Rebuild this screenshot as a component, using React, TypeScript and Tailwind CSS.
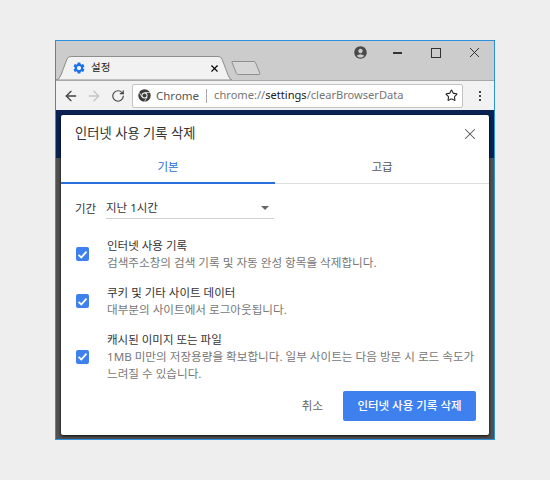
import { ArrowLeft, ArrowRight, RotateCw, Star, X } from "lucide-react";
import { MdAccountCircle, MdSettings } from "react-icons/md";

const rows = [
  {
    title: "인터넷 사용 기록",
    lines: ["검색주소창의 검색 기록 및 자동 완성 항목을 삭제합니다."],
  },
  {
    title: "쿠키 및 기타 사이트 데이터",
    lines: ["대부분의 사이트에서 로그아웃됩니다."],
  },
  {
    title: "캐시된 이미지 또는 파일",
    lines: [
      "1MB 미만의 저장용량을 확보합니다. 일부 사이트는 다음 방문 시 로드 속도가",
      "느려질 수 있습니다.",
    ],
  },
];

function Checkbox() {
  return (
    <div className="flex h-[14px] w-[13px] shrink-0 items-center justify-center rounded-[2px] bg-[#3f80ef]">
      <svg width="11" height="11" viewBox="0 0 11 11" fill="none">
        <path d="M1.5 5.8 4.3 8.5 9.5 2.6" stroke="white" strokeWidth="1.8" />
      </svg>
    </div>
  );
}

function ChromeLogo() {
  return (
    <svg width="13" height="13" viewBox="0 0 24 24">
      <circle cx="12" cy="12" r="11.5" fill="#3c3c3c" />
      <circle cx="12" cy="12" r="5.6" fill="white" />
      <circle cx="12" cy="12" r="3.8" fill="#3c3c3c" />
      <path d="M12 6.4h10M7.2 14.8 2.4 6.5M16.8 14.8 11.8 23.4" stroke="white" strokeWidth="1.3" />
    </svg>
  );
}

export default function App() {
  return (
    <div className="h-[480px] w-[550px] bg-[#eeeeee] pl-[55px] pt-[40px] font-['Noto_Sans','Noto_Sans_CJK_KR',sans-serif]">
      <div className="flex h-[400px] w-[440px] flex-col border border-[#2b90e0]">
        {/* title bar with tab strip */}
        <div className="flex h-[39px] items-end justify-between bg-[#cccccc]">
          <div className="flex items-end">
            <div className="relative flex h-[24px] w-[176px] items-center pl-[16px] pr-[10px]">
              <svg className="absolute inset-0" width="176" height="24" viewBox="0 0 176 24">
                <path d="M0 24 Q3 24 5 19 L11 3 Q12 0.5 15 0.5 H162 Q165 0.5 166 3 L172 19 Q174 24 176 24Z" fill="#f2f2f2" stroke="#8e8e8e" />
              </svg>
              <MdSettings className="relative text-[#1a73e8]" size={14} />
              <span className="relative ml-[5px] flex-1 text-[10.5px] text-[#222]">설정</span>
              <X className="relative mr-[2px] text-black" size={11} strokeWidth={2.4} />
            </div>
            <svg className="mb-[4px] -ml-[1px]" width="30" height="16" viewBox="0 0 30 16">
              <path d="M1 1.5H23Q24 1.5 24.5 2.5L29 13.5Q29 14.5 28 14.5H7Q6 14.5 5.5 13.5L1 2.5Q.7 1.5 1 1.5Z" fill="#d6d6d6" stroke="#8f8f8f" />
            </svg>
          </div>
          <div className="mb-[19px] flex items-center text-[#333]">
            <MdAccountCircle className="mr-[25px] text-[#4a4a4a]" size={15} />
            <div className="mr-[29px] h-[2px] w-[9px] bg-[#333]" />
            <div className="mr-[25px] h-[10px] w-[10px] border-[1.5px] border-[#333]" />
            <X className="mr-[11px]" size={17} strokeWidth={1.4} />
          </div>
        </div>

        {/* toolbar */}
        <div className="flex h-[30px] items-center border-t border-[#a8a8a8] bg-[#f2f2f2] pl-[7px]">
          <ArrowLeft className="text-[#444]" size={16} strokeWidth={2} />
          <ArrowRight className="ml-[7px] text-[#c4c4c4]" size={16} strokeWidth={2} />
          <RotateCw className="ml-[9px] text-[#444]" size={14} strokeWidth={2} />
          <div className="ml-[7px] flex h-[24px] w-[331px] items-center rounded-[2px] border border-[#c4c4c4] bg-white pl-[5px] pr-[4px]">
            <ChromeLogo />
            <span className="ml-[5px] text-[11.5px] text-[#555]">Chrome</span>
            <div className="mx-[7px] h-[14px] w-px bg-[#aaa]" />
            <span className="flex-1 truncate text-[11.1px] text-[#757575]">
              chrome://<span className="text-[#222]">settings</span>/clearBrowserData
            </span>
            <Star className="text-[#222]" size={13} strokeWidth={2} />
          </div>
          <div className="ml-[16px] flex flex-col gap-[2px]">
            <div className="h-[2px] w-[2px] bg-[#444]" />
            <div className="h-[2px] w-[2px] bg-[#444]" />
            <div className="h-[2px] w-[2px] bg-[#444]" />
          </div>
        </div>

        {/* dimmed page with the dialog on top */}
        <div className="flex-1 bg-[linear-gradient(#0b2352_48px,#505050_48px)] px-[5px] pb-[4px] pt-[5px]">
          <div className="flex h-[320px] flex-col rounded-[2px] bg-white shadow-[0_1px_3px_rgba(0,0,0,0.9)]">
            <div className="flex h-[36px] shrink-0 items-center justify-between pl-[14px] pr-[10px] pt-[2px]">
              <span className="text-[13.3px] text-[#333]">인터넷 사용 기록 삭제</span>
              <X className="text-[#555]" size={18} strokeWidth={1.4} />
            </div>

            <div className="flex h-[33px] shrink-0 text-[11.5px]">
              <div className="flex w-[214px] items-center justify-center border-b-2 border-[#2a6fdc] pt-[1px] text-[#2a6fdc]">
                기본
              </div>
              <div className="flex flex-1 items-center justify-center border-b border-[#dddddd] text-[#555]">
                고급
              </div>
            </div>

            <div className="mt-[14px] flex items-center pl-[14px] text-[11.5px] text-[#333]">
              <span className="w-[31px]">기간</span>
              <div className="flex h-[21px] w-[168px] items-center justify-between border-b border-[#d0d0d0] pr-[5px]">
                <span>지난 1시간</span>
                <div className="h-0 w-0 border-x-[4px] border-t-[4px] border-x-transparent border-t-[#666]" />
              </div>
            </div>

            <div className="mt-[18px] flex flex-col gap-[13px] pl-[15px]">
              {rows.map((row) => (
                <div key={row.title} className="flex items-center gap-[18px] leading-[17px]">
                  <Checkbox />
                  <div>
                    <div className="text-[11.5px] text-[#333]">{row.title}</div>
                    {row.lines.map((line) => (
                      <div key={line} className="whitespace-nowrap text-[11.6px] text-[#777]">
                        {line}
                      </div>
                    ))}
                  </div>
                </div>
              ))}
            </div>

            <div className="mt-[9px] flex items-center justify-end pr-[13px]">
              <span className="mr-[20px] text-[11.5px] text-[#666]">취소</span>
              <button className="flex h-[30px] w-[133px] items-center justify-center rounded-[2px] bg-[#3f80ef] text-[11.5px] font-medium text-white">
                인터넷 사용 기록 삭제
              </button>
            </div>
          </div>
        </div>
      </div>
    </div>
  );
}
